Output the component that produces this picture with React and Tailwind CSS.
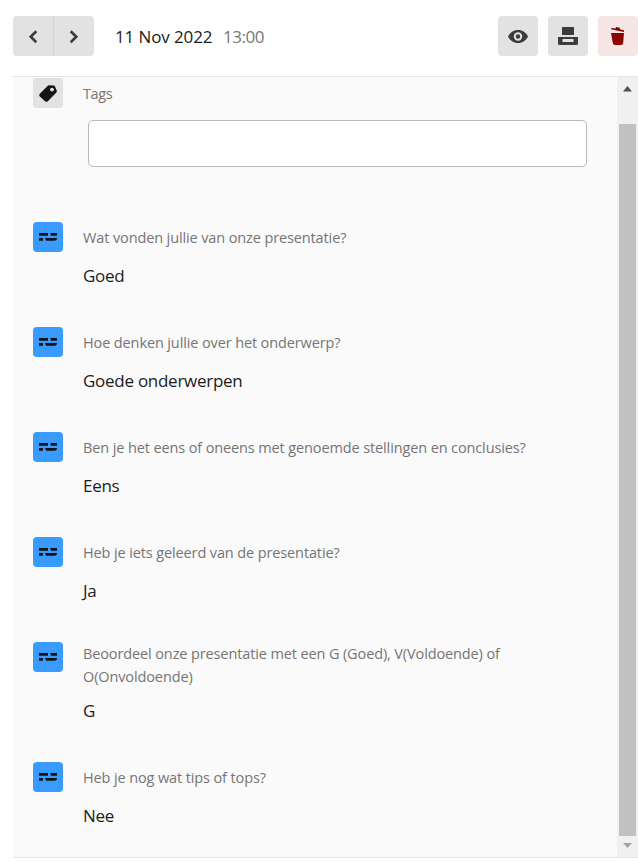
const entries = [
  { question: "Wat vonden jullie van onze presentatie?", answer: "Goed" },
  { question: "Hoe denken jullie over het onderwerp?", answer: "Goede onderwerpen" },
  { question: "Ben je het eens of oneens met genoemde stellingen en conclusies?", answer: "Eens" },
  { question: "Heb je iets geleerd van de presentatie?", answer: "Ja" },
  { question: "Beoordeel onze presentatie met een G (Goed), V(Voldoende) of O(Onvoldoende)", answer: "G" },
  { question: "Heb je nog wat tips of tops?", answer: "Nee" },
];

function Chevron({ d }) {
  return (
    <svg width="40" height="40" viewBox="0 0 40 40" fill="none" stroke="#3b3b3b" strokeWidth="2.6">
      <path d={d} />
    </svg>
  );
}

function EyeIcon() {
  return (
    <svg width="40" height="40" viewBox="0 0 40 40">
      <path fill="#3b3b3b" fillRule="evenodd" d="M10 20.500C12 16.500 15.500 14 20 14s8 2.500 10 6.500C28 24.500 24.500 27 20 27s-8-2.500-10-6.500Z" />
      <circle cx="20" cy="20.500" r="4.200" fill="#e2e2e2" />
      <circle cx="20" cy="20.500" r="2.200" fill="#3b3b3b" />
    </svg>
  );
}

function PrinterIcon() {
  return (
    <svg width="40" height="40" viewBox="0 0 40 40" fill="#3b3b3b">
      <path d="M14 11h12v8H14z" />
      <path fillRule="evenodd" d="M10 21h20v6.500q0 1.500-1.500 1.500h-17q-1.500 0-1.500-1.500ZM14.500 23v3h11v-3Z" />
    </svg>
  );
}

function TrashIcon() {
  return (
    <svg width="40" height="40" viewBox="0 0 40 40" fill="#8b0000">
      <path d="M13.300 11.900l4.200.5.600-1.400 3.600.8.200 1.500 4.300 1.300-.3 1.400-12.800-2.700Z" />
      <path d="M13 17h13l-.9 10.200q-.2 1.800-2 1.800h-6.200q-1.800 0-2-1.800Z" />
    </svg>
  );
}

function TagIcon() {
  return (
    <svg width="30" height="30" viewBox="0 0 30 30">
      <path fill="#141414" fillRule="evenodd" d="M16 7.200l4.700.2q1 .1 1.300 1l1.800 4.400q.3.900-.4 1.600l-8.600 8.800q-1.300 1.200-2.700.1l-5.300-4.700q-1.300-1.400 0-2.800l7.700-7.900q.6-.6 1.500-.7ZM19 9.700a1.900 1.900 0 1 0 0 3.800a1.900 1.900 0 1 0 0-3.800Z" />
    </svg>
  );
}

function OpenTextIcon() {
  return (
    <svg width="30" height="30" viewBox="0 0 30 30" fill="#141414">
      <path d="M6 11h9v2.800H6zM17.200 11H24v2.800h-6zM6 16h4v2.800H6zM12 16h12q0 2.800-2.800 2.800H13Z" />
    </svg>
  );
}

function Entry({ question, answer }) {
  return (
    <div className="flex gap-5 pb-[38px]">
      <div className="size-[30px] shrink-0 rounded bg-[#3a9bff]">
        <OpenTextIcon />
      </div>
      <div className="w-[484px]">
        <div className="flex min-h-[30px] items-center">
          <p className="-mb-px pt-px text-[14.5px] leading-[22.5px] tracking-[-0.12px] text-[#757575]">{question}</p>
        </div>
        <p className="pt-[10px] text-[17px] leading-[27px] tracking-[-0.27px] text-[#1c1c1c]">{answer}</p>
      </div>
    </div>
  );
}

export default function App() {
  return (
    <div className="flex h-[861px] w-[638px] flex-col overflow-hidden bg-white pl-[13px] font-['Open_Sans',sans-serif]">
      <header className="flex h-[76px] shrink-0 items-start pt-4">
        <div className="flex h-10 w-[81px] overflow-hidden rounded bg-[#e2e2e2]">
          <button className="w-[41px] border-r border-[#d4d4d4]"><Chevron d="M23.300 15.300L17.700 20.800l5.600 5.500" /></button>
          <button className="w-10"><Chevron d="M16.700 15.300l5.600 5.500l-5.600 5.500" /></button>
        </div>
        <div className="flex h-10 flex-1 items-center pl-[21px] pt-0.5 text-[17px]">
          <span className="w-[108px] whitespace-nowrap tracking-[-0.12px] text-[#1c1c1c]">11 Nov 2022</span>
          <span className="whitespace-nowrap tracking-[-0.5px] text-[#777777]">13:00</span>
        </div>
        <div className="flex gap-[10px]">
          <button className="size-10 rounded bg-[#e2e2e2]"><EyeIcon /></button>
          <button className="size-10 rounded bg-[#e2e2e2]"><PrinterIcon /></button>
          <button className="size-10 rounded bg-[#f5e5e5]"><TrashIcon /></button>
        </div>
      </header>
      <main className="flex h-[782px] shrink-0 overflow-hidden border-y border-[#e5e5e5] bg-[#fafafa]">
        <div className="w-[604px] pl-5 pt-px">
          <div className="flex h-[42px] gap-5">
            <div className="size-[30px] rounded bg-[#e2e2e2]"><TagIcon /></div>
            <p className="text-[14.5px] leading-[31px] tracking-[-0.4px] text-[#757575]">Tags</p>
          </div>
          <div className="mb-[55px] ml-[55px] h-[47px] w-[499px] rounded-[5px] border border-[#b9b9b9] bg-white" />
          {entries.map((e) => <Entry key={e.question} {...e} />)}
        </div>
        <div className="flex w-[21px] flex-col items-center bg-[#f0f0f0]">
          <svg width="21" height="47" viewBox="0 0 21 47"><path fill="#505050" d="M6 14.500L10.500 9l4.500 5.500Z" /></svg>
          <div className="h-[712px] w-[17px] bg-[#c1c1c1]" />
          <svg width="21" height="21" viewBox="0 0 21 21"><path fill="#a3a3a3" d="M6 7h9l-4.500 5Z" /></svg>
        </div>
      </main>
    </div>
  );
}
